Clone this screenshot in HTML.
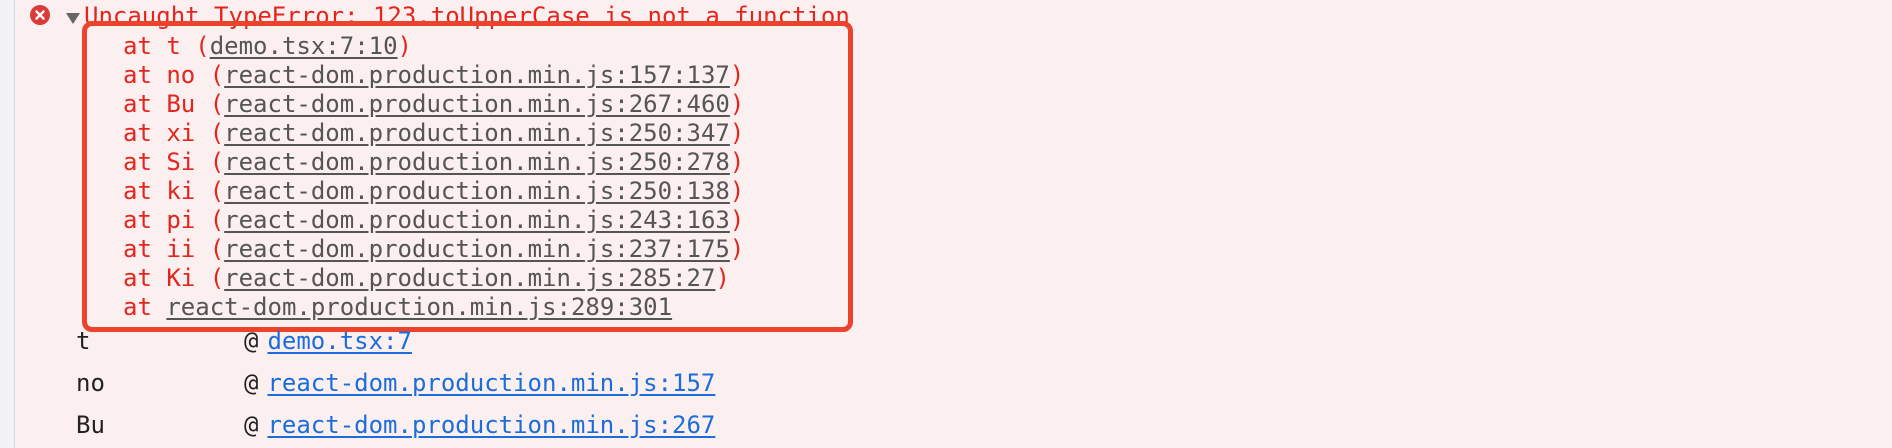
<!DOCTYPE html><html><head><style>
body{margin:0;width:1892px;height:448px;overflow:hidden;background:#fcefef;font-family:"DejaVu Sans Mono","Liberation Mono",monospace;font-size:24px;position:relative}
.gut{position:absolute;left:0;top:0;width:14px;height:448px;background:#f1f2f4;border-right:1px solid #d9d9dc}
.l{position:absolute;white-space:pre;line-height:29px;color:#e3261d}
.u{color:#555;text-decoration:underline;text-underline-offset:3px}
.b{color:#222}
.a{color:#1a6ddb;text-decoration:underline;text-underline-offset:3px;margin-left:9px}
.box{position:absolute;left:82px;top:21px;width:761px;height:301px;border:5px solid #ec432c;border-radius:10px}
</style></head><body>
<div class="gut"></div>
<svg style="position:absolute;left:30px;top:5px" width="20" height="20"><circle cx="10" cy="10" r="10" fill="#d93a3a"/><path d="M6.5 6.5L13.5 13.5M13.5 6.5L6.5 13.5" stroke="#fff" stroke-width="2.4" stroke-linecap="round"/></svg>
<svg style="position:absolute;left:66px;top:13px" width="14" height="11"><path d="M0 0H14L7 11Z" fill="#666"/></svg>
<div class="l" style="left:84px;top:2px">Uncaught TypeError: 123.toUpperCase is not a function</div>
<div class="l" style="left:123px;top:32px">at t (<span class="u">demo.tsx:7:10</span>)
at no (<span class="u">react-dom.production.min.js:157:137</span>)
at Bu (<span class="u">react-dom.production.min.js:267:460</span>)
at xi (<span class="u">react-dom.production.min.js:250:347</span>)
at Si (<span class="u">react-dom.production.min.js:250:278</span>)
at ki (<span class="u">react-dom.production.min.js:250:138</span>)
at pi (<span class="u">react-dom.production.min.js:243:163</span>)
at ii (<span class="u">react-dom.production.min.js:237:175</span>)
at Ki (<span class="u">react-dom.production.min.js:285:27</span>)
at <span class="u">react-dom.production.min.js:289:301</span></div>
<div class="box"></div>
<div class="l b" style="left:76px;top:327px">t</div><div class="l b" style="left:244px;top:327px">@<span class="a">demo.tsx:7</span></div>
<div class="l b" style="left:76px;top:369px">no</div><div class="l b" style="left:244px;top:369px">@<span class="a">react-dom.production.min.js:157</span></div>
<div class="l b" style="left:76px;top:411px">Bu</div><div class="l b" style="left:244px;top:411px">@<span class="a">react-dom.production.min.js:267</span></div>
</body></html>
